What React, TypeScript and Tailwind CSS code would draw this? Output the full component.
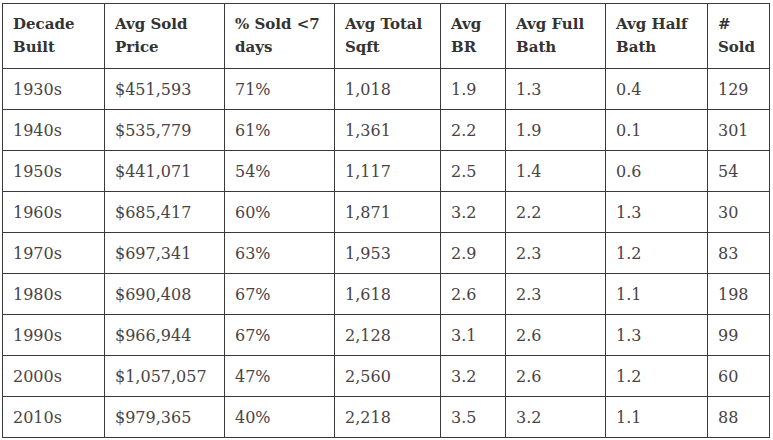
import React from "react";

const headers: [string, string][] = [
  ["Decade", "Built"],
  ["Avg Sold", "Price"],
  ["% Sold <7", "days"],
  ["Avg Total", "Sqft"],
  ["Avg", "BR"],
  ["Avg Full", "Bath"],
  ["Avg Half", "Bath"],
  ["#", "Sold"],
];

const widths = [102, 120, 110, 106, 65, 100, 102, 62];

const rows: string[][] = [
  ["1930s", "$451,593", "71%", "1,018", "1.9", "1.3", "0.4", "129"],
  ["1940s", "$535,779", "61%", "1,361", "2.2", "1.9", "0.1", "301"],
  ["1950s", "$441,071", "54%", "1,117", "2.5", "1.4", "0.6", "54"],
  ["1960s", "$685,417", "60%", "1,871", "3.2", "2.2", "1.3", "30"],
  ["1970s", "$697,341", "63%", "1,953", "2.9", "2.3", "1.2", "83"],
  ["1980s", "$690,408", "67%", "1,618", "2.6", "2.3", "1.1", "198"],
  ["1990s", "$966,944", "67%", "2,128", "3.1", "2.6", "1.3", "99"],
  ["2000s", "$1,057,057", "47%", "2,560", "3.2", "2.6", "1.2", "60"],
  ["2010s", "$979,365", "40%", "2,218", "3.5", "3.2", "1.1", "88"],
];

export default function App() {
  return (
    <div className="w-[773px] h-[440px] bg-white pl-[2px] pt-[3px] font-['DejaVu_Serif',serif]">
      <table className="w-[768px] table-fixed border-collapse">
        <colgroup>
          {widths.map((w, i) => (
            <col key={i} style={{ width: w }} />
          ))}
        </colgroup>
        <thead>
          <tr className="h-[65px]">
            {headers.map(([a, b], i) => (
              <th
                key={i}
                className="border border-[#3a3a3a] px-[10px] text-left align-middle text-[15px] leading-[23px] font-bold text-[#333333]"
              >
                {a}
                <br />
                {b}
              </th>
            ))}
          </tr>
        </thead>
        <tbody>
          {rows.map((r, ri) => (
            <tr key={ri} className="h-[41px]">
              {r.map((c, ci) => (
                <td
                  key={ci}
                  className="border border-[#3a3a3a] px-[10px] align-middle text-[16px] leading-[23px] font-light text-[#4a4346] whitespace-nowrap"
                >
                  {c}
                </td>
              ))}
            </tr>
          ))}
        </tbody>
      </table>
    </div>
  );
}
